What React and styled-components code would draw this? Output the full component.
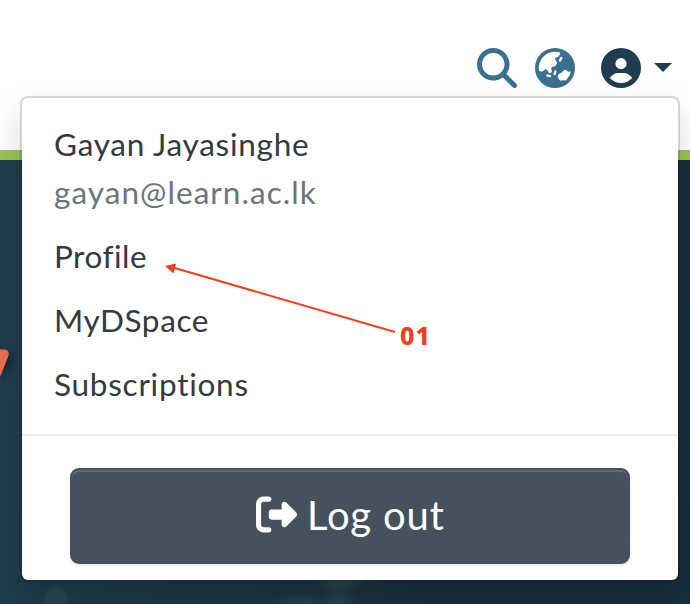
import React from "react";
import styled, { createGlobalStyle } from "styled-components";
import {
  FaMagnifyingGlass,
  FaEarthAsia,
  FaCircleUser,
  FaRightFromBracket,
} from "react-icons/fa6";

const GlobalStyle = createGlobalStyle`
  *, *::before, *::after { box-sizing: border-box; }
  body { margin: 0; background: #fff; font-family: Lato, "Noto Sans", sans-serif; }
`;

const Page = styled.div`
  position: relative;
  display: flex;
  flex-direction: column;
  width: 690px;
  height: 604px;
  overflow: hidden;
`;

const Header = styled.header`
  display: flex;
  align-items: flex-start;
  justify-content: flex-end;
  height: 160px;
  padding: 48px 18px 0 0;
  background: #fff;
  border-bottom: 10px solid #9ac355;
`;

const IconButton = styled.button`
  display: flex;
  align-items: center;
  gap: 13px;
  height: 40px;
  margin: 0 0 0 ${(p) => p.$gap || 0}px;
  padding: 0;
  border: 0;
  background: none;
  color: ${(p) => p.$color || "#396f8f"};

  svg {
    display: block;
  }
`;

const Caret = styled.span`
  width: 18px;
  height: 9px;
  margin-top: -1px;
  background: currentColor;
  clip-path: polygon(0 0, 100% 0, 50% 100%);
`;

const Hero = styled.section`
  position: relative;
  flex: 1;
  background:
    radial-gradient(circle at 56px 438px, #294650 0 9px, transparent 13px),
    radial-gradient(ellipse 30px 14px at 340px 420px, #2c4849 0, transparent 100%),
    radial-gradient(ellipse 34px 16px at 300px 446px, #284652 0, transparent 100%),
    radial-gradient(ellipse 20px 24px at 338px 446px, #2a4650 0, transparent 100%),
    linear-gradient(100deg, #1f3f4e 0%, #1d3847 30%, #192e3c 65%, #182e3c 100%);
`;

const Stroke = styled.svg`
  position: absolute;
  left: 0;
  top: 184px;
  filter: drop-shadow(3px 4px 3px rgba(0, 0, 0, 0.4));
`;

const Menu = styled.nav`
  position: absolute;
  left: 20px;
  top: 96px;
  display: flex;
  flex-direction: column;
  width: 660px;
  height: 486px;
  padding: 22px 0 16px;
  color: #343a40;
  background: #fff;
  background-clip: padding-box;
  border: 2px solid rgba(0, 0, 0, 0.15);
  border-radius: 8px;
  box-shadow: 0 16px 32px rgba(0, 0, 0, 0.15);
`;

const Line = styled.div`
  padding-left: 32px;
  height: ${(p) => p.$height || 48}px;
  line-height: ${(p) => p.$height || 48}px;
  font-size: 31.5px;
  letter-spacing: ${(p) => p.$spacing || 0}px;
  color: ${(p) => (p.$muted ? "#6c757d" : "inherit")};
  white-space: nowrap;
`;

const Links = styled.div`
  display: flex;
  flex-direction: column;
  padding: 8px 0 18px;
`;

const Divider = styled.div`
  height: 2px;
  background: #e9ecef;
`;

const LogoutButton = styled.button`
  display: flex;
  align-items: center;
  justify-content: flex-start;
  gap: 10px;
  height: 96px;
  margin: 32px 48px 0;
  padding: 0 0 0 184px;
  border: 2px solid #45515d;
  border-radius: 9px;
  background: #45515d;
  box-shadow: inset 0 2px 0 rgba(255, 255, 255, 0.15), 0 2px 2px rgba(0, 0, 0, 0.075);
  color: #fff;
  font-family: inherit;
  font-size: 40px;
  letter-spacing: ${(p) => p.$spacing || 0}px;
  white-space: nowrap;

  svg {
    flex: none;
    margin-top: -4px;
  }

  span {
    margin-top: -3px;
  }
`;

const Arrow = styled.svg`
  position: absolute;
  left: 160px;
  top: 258px;
`;

const Callout = styled.span`
  position: absolute;
  left: 400px;
  top: 319px;
  color: #ee4023;
  font: 800 25px/32px "Noto Sans", sans-serif;
  letter-spacing: 1px;
`;

export default function App() {
  return (
    <>
      <GlobalStyle />
      <Page>
        <Header>
          <IconButton aria-label="Search">
            <FaMagnifyingGlass size={40} />
          </IconButton>
          <IconButton $gap={18} aria-label="Language">
            <FaEarthAsia size={40} />
          </IconButton>
          <IconButton $gap={26} $color="#1f3d4e" aria-label="Account">
            <FaCircleUser size={40} />
            <Caret />
          </IconButton>
        </Header>
        <Hero>
          <Stroke width="24" height="60" viewBox="0 0 24 60">
            <path d="M0 5.5H3C8 5.5 10 8 8 13L0 33Z" fill="#ed6f52" />
          </Stroke>
        </Hero>
        <Menu>
          <Line $spacing={0.75}>Gayan Jayasinghe</Line>
          <Line $muted $spacing={1.05}>gayan@learn.ac.lk</Line>
          <Links>
            <Line $height={64} $spacing={0.5}>Profile</Line>
            <Line $height={64} $spacing={0.6}>MyDSpace</Line>
            <Line $height={64} $spacing={0.75}>Subscriptions</Line>
          </Links>
          <Divider />
          <LogoutButton $spacing={0.8}>
            <FaRightFromBracket size={41} />
            <span>Log out</span>
          </LogoutButton>
        </Menu>
        <Arrow width="240" height="80" viewBox="0 0 240 80">
          <path d="M13 9.5L235 74" stroke="#ee4023" strokeWidth="2" />
          <path d="M5 8L16 5.5L13.5 15.5Z" fill="#ee4023" />
        </Arrow>
        <Callout>01</Callout>
      </Page>
    </>
  );
}
